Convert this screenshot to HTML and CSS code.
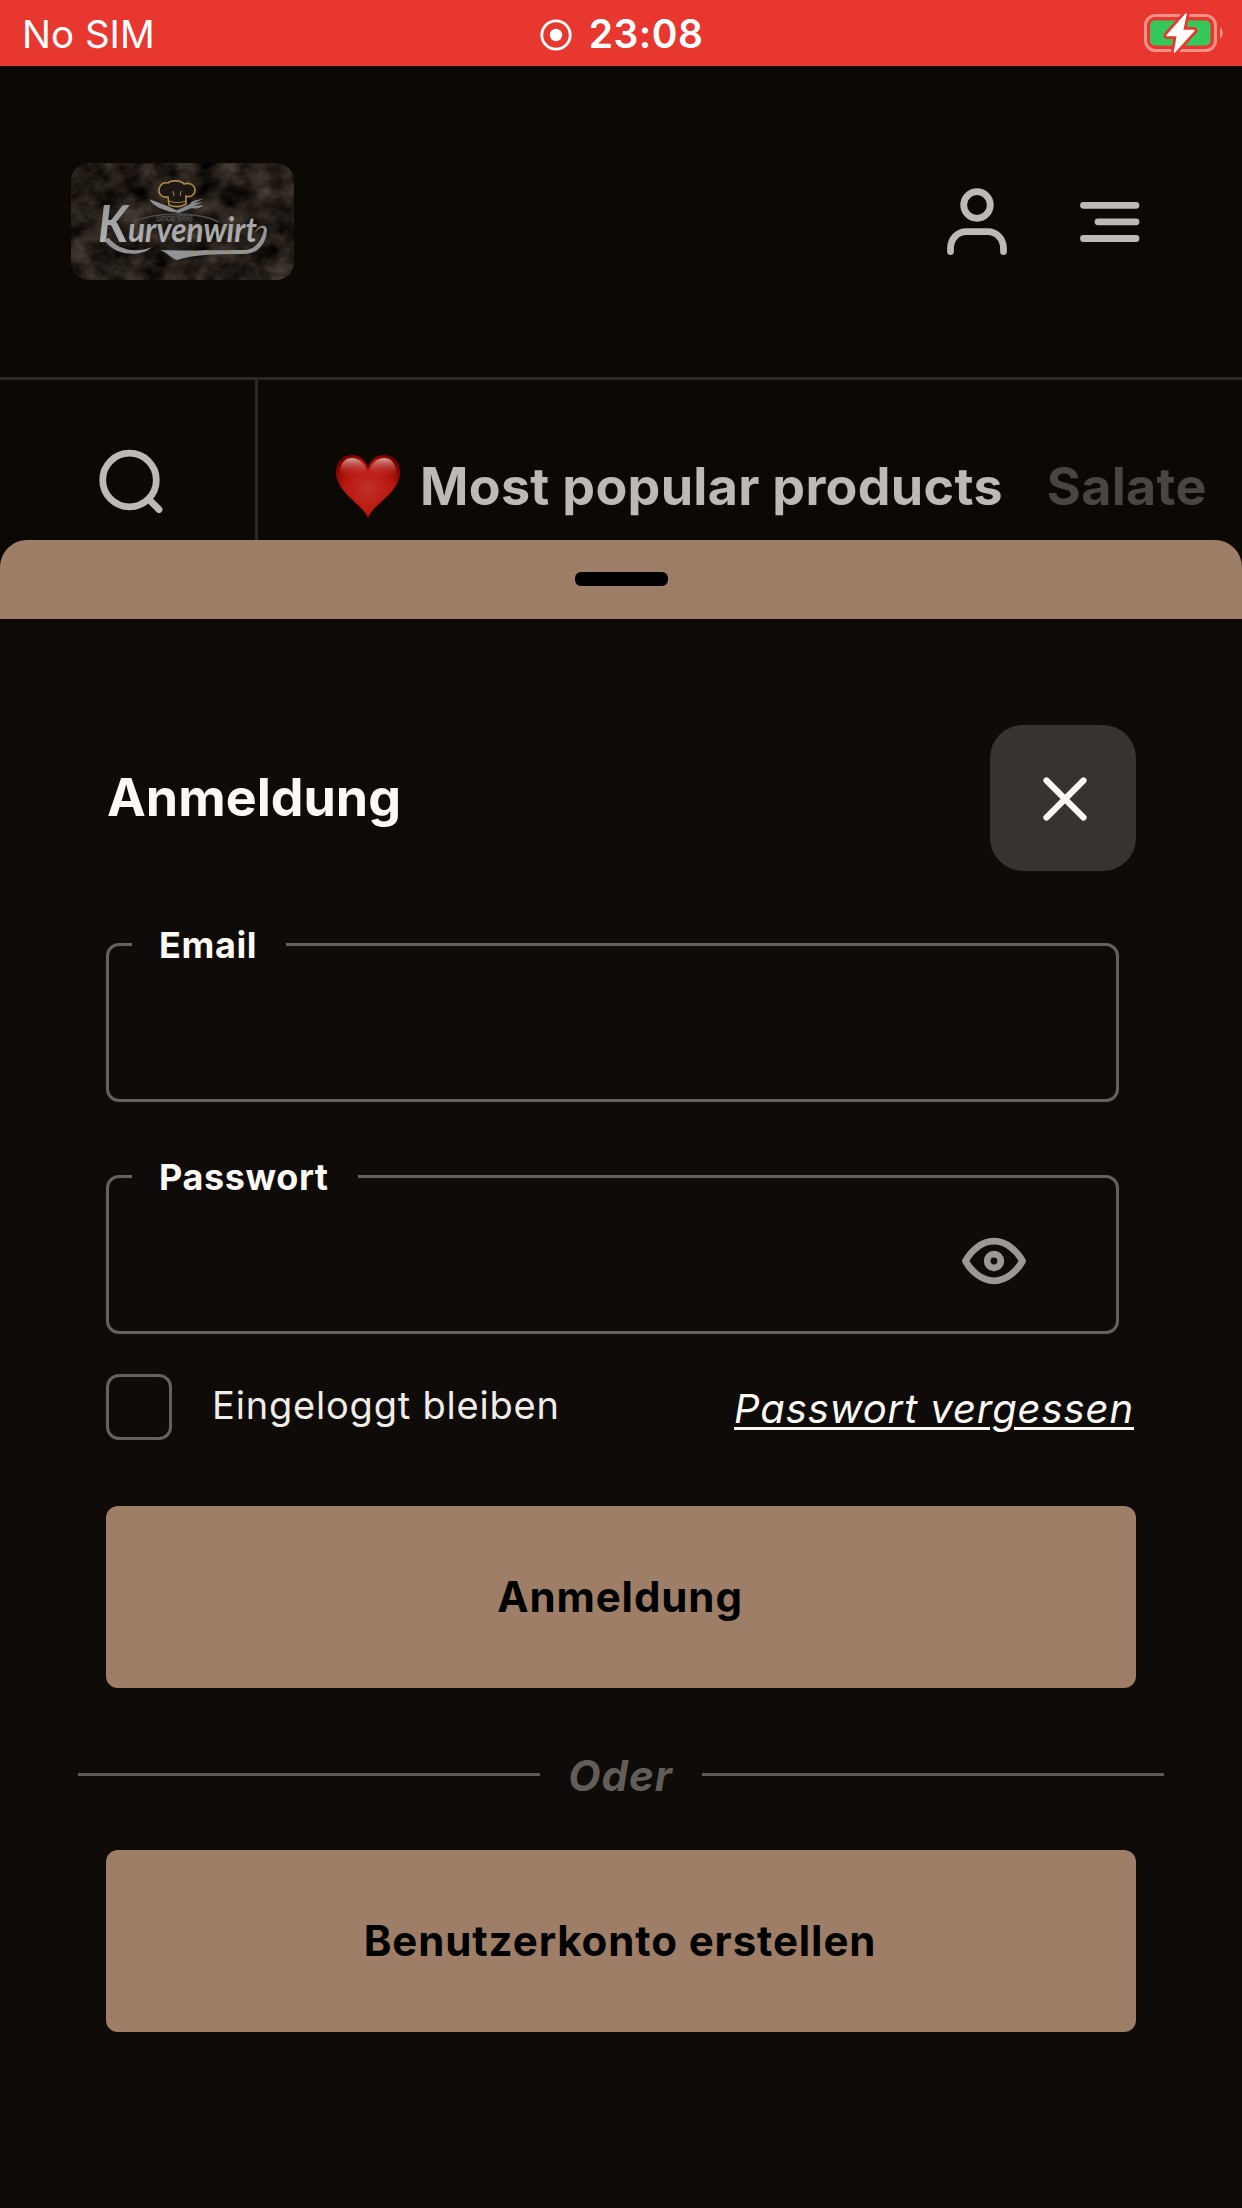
FILE: index.html
```
<!DOCTYPE html>
<html lang="de">
<head>
	<meta charset="utf-8">
	<title>Kurvenwirt - Anmeldung</title>
	<link rel="stylesheet" href="styles.css">
</head>
<body>
	<div class="status">
		<span class="carrier">No SIM</span>
		<div class="clock">
			<svg class="rec" width="32" height="32" viewBox="0 0 32 32"><circle cx="16" cy="16" r="14.2" fill="none" stroke="#fff" stroke-width="2.8"/><circle cx="16" cy="16" r="6.2" fill="#fff"/></svg>
			<span class="time">23:08</span>
		</div>
		<svg class="battery" width="80" height="42" viewBox="0 0 80 42">
			<rect x="2.5" y="3.5" width="70" height="35" rx="10" fill="none" stroke="#f2908b" stroke-width="3"/>
			<path d="M77 15.500c3.500 2 3.500 9 0 11z" fill="#f2908b"/>
			<rect x="7" y="8.500" width="60.500" height="25" rx="5" fill="#34c759"/>
			<path d="M43 2L24 23.500h10.500L31.500 40 51 18.500H39.500z" fill="#fff" stroke="#e8372f" stroke-width="7" stroke-linejoin="round"/>
			<path d="M43 2L24 23.500h10.500L31.500 40 51 18.500H39.500z" fill="#fff" stroke="#fff" stroke-width="1.500" stroke-linejoin="round"/>
		</svg>
	</div>

	<div class="header">
		<svg class="logo" width="223" height="117" viewBox="0 0 223 117">
			<defs>
				<filter id="stone" x="0" y="0" width="100%" height="100%" color-interpolation-filters="sRGB">
					<feTurbulence type="fractalNoise" baseFrequency="0.04 0.05" numOctaves="6" seed="21"/>
					<feColorMatrix values="0.42 0.1 0 0 -0.12  0.37 0.1 0 0 -0.12  0.33 0.1 0 0 -0.12  0 0 0 0 1"/>
				</filter>
				<clipPath id="round"><rect width="223" height="117" rx="18"/></clipPath>
				<linearGradient id="silver" x1="0" y1="0" x2="0" y2="1"><stop offset="0" stop-color="#8f9091"/><stop offset="1" stop-color="#b5b6b7"/></linearGradient>
			</defs>
			<g clip-path="url(#round)">
				<rect width="223" height="117" filter="url(#stone)"/>
			</g>
			<path d="M97 34c-6 1-10-3-9-8 1-5 5-7 9-6 2-3 13-3 16 1 5-2 11 1 11 6s-5 8-9 6v8c-5 3-12 3-17 1z" fill="#1c1712" stroke="#ab8844" stroke-width="1.600"/>
			<path d="M98 38c5 2 11 2 17 0M102 28l1 5M110 28l-1 5" fill="none" stroke="#ab8844"/>
			<path d="M78 36c7 3 18 6 29 12l-6 1c-9-2-18-5-23-13z" fill="#8f9090"/>
			<path d="M102 49l17-8c2-4 6-4 13-5l-9 4 9-1-9 4 9-1c-3 4-7 4-11 3l-13 5z" fill="#858688"/>
			<path d="M62 59c22-10 63-11 86 0" fill="none" stroke="#4a4b4c" stroke-width="1.500"/>
			<text class="since" x="85" y="58" textLength="37">Since 1998</text>
			<text class="brand" x="27" y="79" textLength="159" lengthAdjust="spacingAndGlyphs"><tspan class="brand-k">K</tspan>urvenwirt</text>
			<path d="M38 75c8 11 26 16 43 9-11 11-39 9-48-8z" fill="#929394"/>
			<path d="M89 87c28 1 64 0 84 0 12 0 18-11 20-20-1-4-6-2-9 3 2-8 12-10 12-3-1 15-10 24-23 24-25 0-48 0-67 6-5-1-9-7-17-10z" fill="#929394"/>
			<path d="M117 89h60" fill="none" stroke="#a68950" stroke-dasharray="9 9"/>
		</svg>
		<div class="actions">
			<svg class="user line" width="66" height="72" viewBox="0 0 66 72"><circle cx="33" cy="17" r="13.300"/><path d="M6.500 63.500v-3c0-10 7-16.800 16-16.800h21c9 0 16 6.800 16 16.800v3"/></svg>
			<svg class="line" width="66" height="42" viewBox="0 0 66 42"><path d="M6.500 4.300h52.500M21 20.800h38M6.500 37.500h52.500"/></svg>
		</div>
	</div>

	<div class="nav">
		<div class="search">
			<svg class="line" width="70" height="70" viewBox="0 0 70 70"><circle cx="33.500" cy="33" r="26.800"/><path d="M53 52.500l10 10"/></svg>
		</div>
		<div class="tabs">
			<svg class="heart" width="64" height="64" viewBox="0 0 64 64">
				<defs>
					<radialGradient id="red" cx=".5" cy=".55" r=".62"><stop offset="0" stop-color="#c03027"/><stop offset=".6" stop-color="#b9170f"/><stop offset="1" stop-color="#780000"/></radialGradient>
					<linearGradient id="shine" x1="0" y1="0" x2="0" y2="1"><stop offset="0" stop-color="#dba19b"/><stop offset="1" stop-color="#c02c24" stop-opacity="0"/></linearGradient>
				</defs>
				<path d="M32 63C27 49 0 38 0 17 0 7 7 0 16 0c8 0 14 5 16 14C34 5 40 0 48 0c9 0 16 7 16 17 0 21-27 32-32 46z" fill="url(#red)"/>
				<path d="M4 20C3 9 9 3 16 3c7 0 12 5 15 13C25 21 12 23 4 20zM60 20C61 9 55 3 48 3c-7 0-12 5-15 13 6 5 19 7 27 4z" fill="url(#shine)"/>
			</svg>
			<span class="tab active">Most popular products</span>
			<span class="tab next">Salate</span>
		</div>
	</div>

	<div class="sheet">
		<div class="grip"><i></i></div>
		<form class="login">
			<div class="head">
				<h1>Anmeldung</h1>
				<button type="button" class="close"><svg width="46" height="46" viewBox="0 0 46 46"><path d="M4.500 4.500l37 37M41.500 4.500l-37 37"/></svg></button>
			</div>
			<fieldset class="field"><legend class="l-mail">Email</legend></fieldset>
			<fieldset class="field">
				<legend class="l-pass">Passwort</legend>
				<svg class="eye" width="66" height="50" viewBox="0 0 66 50"><path d="M4.500 25C10 15 20.500 5.200 33 5.200S56 15 61.500 25C56 35 45.500 44.800 33 44.800S10 35 4.500 25z"/><circle cx="33" cy="25" r="6.800"/></svg>
			</fieldset>
			<div class="row">
				<label class="stay"><i class="box"></i><span>Eingeloggt bleiben</span></label>
				<a class="forgot">Passwort vergessen</a>
			</div>
			<button type="button" class="btn">Anmeldung</button>
			<div class="or"><span>Oder</span></div>
			<button type="button" class="btn">Benutzerkonto erstellen</button>
		</form>
	</div>
</body>
</html>
```
FILE: styles.css
```
* {margin: 0; padding: 0; box-sizing: border-box;}
body {width: 1242px; height: 2208px; overflow: hidden; position: relative; background: #0c0804; font-family: Inter, "Liberation Sans", sans-serif; color: #fcf9f4;}
svg {display: block; flex: none;}
span, a, h1 {white-space: nowrap;}
button {border: 0; font-family: inherit;}

.status {display: grid; grid-template-columns: 1fr auto 1fr; align-items: center; height: 66px; padding: 0 19px 0 22px; background: #e8372f; color: #fff;}
.carrier {font-size: 38.5px; line-height: 68px;}
.clock {display: flex; align-items: center; gap: 17px; margin-right: 2px;}
.time {font-size: 39px; line-height: 68px; font-weight: 600; letter-spacing: 0.5px;}
.rec {margin-top: 1px;}
.battery {justify-self: end; margin-top: -3px;}

.header {display: flex; justify-content: space-between; align-items: center; height: 311px; padding: 0 99px 0 71px;}
.actions {display: flex; align-items: center; gap: 67px;}
.user {margin-top: 5px;}
.line {fill: none; stroke: #bdb9b4; stroke-width: 6.8; stroke-linecap: round; stroke-linejoin: round;}

.nav {display: flex; height: 220px; border-top: 3px solid #2b2724;}
.search {width: 258px; padding: 67px 0 0 96px; border-right: 3px solid #2b2724;}
.tabs {display: flex; padding: 75px 0 0 78px;}
.tab {font-size: 52px; line-height: 64px; font-weight: 700; color: #bdb9b4; letter-spacing: 0.3px;}
.active {margin-left: 20px;}
.next {margin-left: 44px; color: #494541;}

.sheet {position: absolute; left: 0; right: 0; top: 539.5px; bottom: 0; background: #0f0b08; border-radius: 27px 27px 0 0; overflow: hidden;}
.grip {display: flex; justify-content: center; height: 79.5px; padding-top: 32.5px; background: #9e7e67;}
.grip i {width: 93px; height: 14px; border-radius: 6px; background: #000;}

.login {padding: 106px 106px 0;}
.head {display: flex; justify-content: space-between; align-items: center; margin-bottom: 53px;}
.head h1 {font-size: 52px; line-height: 64px; font-weight: 700; padding-left: 1px;}
.close {display: flex; align-items: center; justify-content: center; width: 146px; height: 146px; padding: 2px 0 0 3px; border-radius: 33px; background: #383330;}
.close svg {fill: none; stroke: #fcf9f4; stroke-width: 6.2; stroke-linecap: round;}

.field {width: 1013px; height: 178px; margin-bottom: 54px; padding: 0 23px; border: 3px solid #66615e; border-radius: 13px;}
.field legend {padding: 1px 30px 0 27px; font-size: 36px; line-height: 40px; font-weight: 700; letter-spacing: 0.6px;}
.l-mail {width: 154px;}
.l-pass {width: 226px;}
.eye {margin: 39px 66px 0 auto; fill: none; stroke: #9c9893; stroke-width: 6.8; stroke-linejoin: round;}

.row {display: flex; justify-content: space-between; height: 66px; margin: -14px 0 66px;}
.stay {display: flex; align-items: center; font-size: 38px; line-height: 62px; letter-spacing: 0.8px; color: #f0ede8;}
.stay span {padding-left: 40px; margin-top: -5px;}
.box {width: 66px; height: 66px; border: 3px solid #66615e; border-radius: 13px;}
.forgot {margin-right: 2px; font-size: 40px; line-height: 70px; font-style: italic; letter-spacing: 0.9px; text-decoration: underline; text-decoration-thickness: 3px; text-underline-offset: 4px;}

.btn {display: block; width: 1030px; height: 182px; padding-right: 2px; border-radius: 12px; background: #9e7e67; color: #000; font-size: 42px; line-height: 182px; font-weight: 700; letter-spacing: 0.9px;}
.or {display: flex; align-items: center; gap: 29px; height: 162px; margin: 0 -28px; padding-top: 13px; color: #625d59;}
.or:before, .or:after {content: ""; flex: 1; height: 3px; margin-top: -3px; background: #5f5a56;}
.or span {font-size: 42px; line-height: 50px; font-style: italic; font-weight: 700; letter-spacing: 0.9px; margin-left: -1px;}

.since {font-size: 8px; fill: #59595a;}
.brand {font-family: Lato, sans-serif; font-style: italic; font-weight: 700; font-size: 35px; fill: url(#silver);}
.brand-k {font-size: 52px;}
```
